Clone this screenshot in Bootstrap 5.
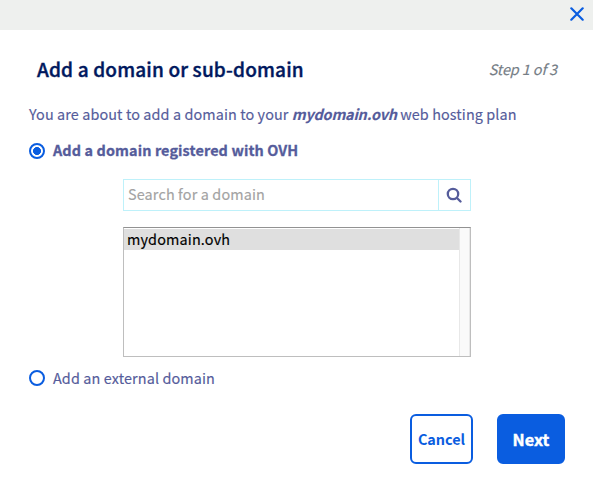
<!DOCTYPE html>
<html lang="en">
<head>
<meta charset="utf-8">
<meta name="viewport" content="width=device-width, initial-scale=1">
<title>Add a domain or sub-domain</title>
<link href="https://cdn.jsdelivr.net/npm/bootstrap@5.3.0/dist/css/bootstrap.min.css" rel="stylesheet">
<style>
body{font-family:"Noto Sans CJK SC","Noto Sans",sans-serif;font-size:14.4px;line-height:20px;letter-spacing:.1px;color:#555c9b;background:#fff;overflow:hidden}
.topbar{height:30px;background:#eef0ee;padding:0 9px 2px}
.close-btn{width:14px;height:14px;line-height:0}
.heading{height:24px;margin-top:27px;padding:0 36px 0 37px}
.dlg-title{font-size:19px;line-height:24px;font-weight:500;letter-spacing:.16px;color:#00185e;-webkit-text-stroke:.4px #00185e}
.step{font-size:14.4px;letter-spacing:-.1px;color:#757d85;-webkit-text-stroke:.15px #757d85}
.content{padding:0 29px}
.intro{margin-top:23px;-webkit-text-stroke:.15px #555c9b}
.intro strong{letter-spacing:-.18px}
.choice{height:20px;gap:8px}
.choice .form-check-input{width:16px;height:16px;margin:0;border:2px solid #0a5de0;background:#fff;box-shadow:none}
.choice .form-check-input:checked{background:radial-gradient(circle,#0a5de0 0 3.7px,#fff 4.3px)}
.first{margin-top:17px;letter-spacing:.12px;-webkit-text-stroke:.3px #555c9b}
.first span{margin-bottom:2px}
.picker{width:348px;margin:18px 0 0 94px}
.search{height:32px}
.search .form-control{font:inherit;letter-spacing:.14px;border:1px solid #bef1fa;border-radius:0;padding:0 4px 2px;color:#555c9b;-webkit-text-stroke:.15px}
.search .form-control::placeholder{color:#a3a3a3;opacity:1}
.search .btn{width:33px;padding:0 2px 1px 0;border:1px solid #bef1fa;border-radius:0;line-height:0;color:#555c9b}
.listing{height:130px;margin-top:16px;border:1px solid #bebebe;border-top-color:#929292}
.options{padding-top:1px}
.option{height:21px;line-height:19px;padding-left:3px;background:#dfdfdf;color:#000;letter-spacing:.16px;-webkit-text-stroke:.15px #000}
.track{width:11px;background:#fafafa;border:solid #e8e8e8;border-width:0 1px}
.second{margin-top:11px;letter-spacing:.12px;-webkit-text-stroke:.15px #555c9b}
.actions{margin-top:26px;padding-right:28px;gap:24px}
.actions .btn{height:50px;padding:0;border:2px solid #0a5de0;border-radius:6px;font-weight:700;line-height:22px}
.cancel{width:63px;font-size:14.4px;letter-spacing:0;color:#0a5de0;background:#fff}
.next{width:68px;font-size:16.2px;letter-spacing:.1px;color:#fff;background:#0a5de0;-webkit-text-stroke:.4px #fff}
</style>
</head>
<body>
<header class="topbar d-flex justify-content-end align-items-center">
<button class="close-btn btn p-0 border-0" aria-label="Close"><svg width="14" height="14" viewBox="0 0 14 14" fill="none" stroke="#0a5de0" stroke-width="2.2" stroke-linecap="round"><path d="M1.3 1.3 12.7 12.7M12.7 1.3 1.3 12.7"/></svg></button>
</header>
<main>
<div class="heading d-flex justify-content-between align-items-center">
<h1 class="dlg-title m-0">Add a domain or sub-domain</h1>
<em class="step">Step 1 of 3</em>
</div>
<div class="content">
<p class="intro mb-0 text-nowrap">You are about to add a domain to your <strong><em>mydomain.ovh</em></strong> web hosting plan</p>
<label class="choice first d-flex align-items-center fw-bold"><input class="form-check-input" type="radio" name="kind" checked><span>Add a domain registered with OVH</span></label>
<div class="picker">
<div class="search input-group flex-nowrap">
<input class="form-control" type="text" placeholder="Search for a domain">
<button class="btn" aria-label="Search"><svg width="16" height="16" viewBox="0 0 16 16" fill="none" stroke="currentColor" stroke-width="2.3" stroke-linecap="round"><circle cx="7" cy="7" r="5.2"/><path d="m11 11 3.5 3.5"/></svg></button>
</div>
<div class="listing d-flex">
<div class="options flex-grow-1"><div class="option">mydomain.ovh</div></div>
<div class="track"></div>
</div>
</div>
<label class="choice second d-flex align-items-center"><input class="form-check-input" type="radio" name="kind"><span>Add an external domain</span></label>
</div>
<div class="actions d-flex justify-content-end">
<button class="btn cancel">Cancel</button>
<button class="btn next">Next</button>
</div>
</main>
<script src="https://cdn.jsdelivr.net/npm/bootstrap@5.3.0/dist/js/bootstrap.bundle.min.js"></script>
</body>
</html>
